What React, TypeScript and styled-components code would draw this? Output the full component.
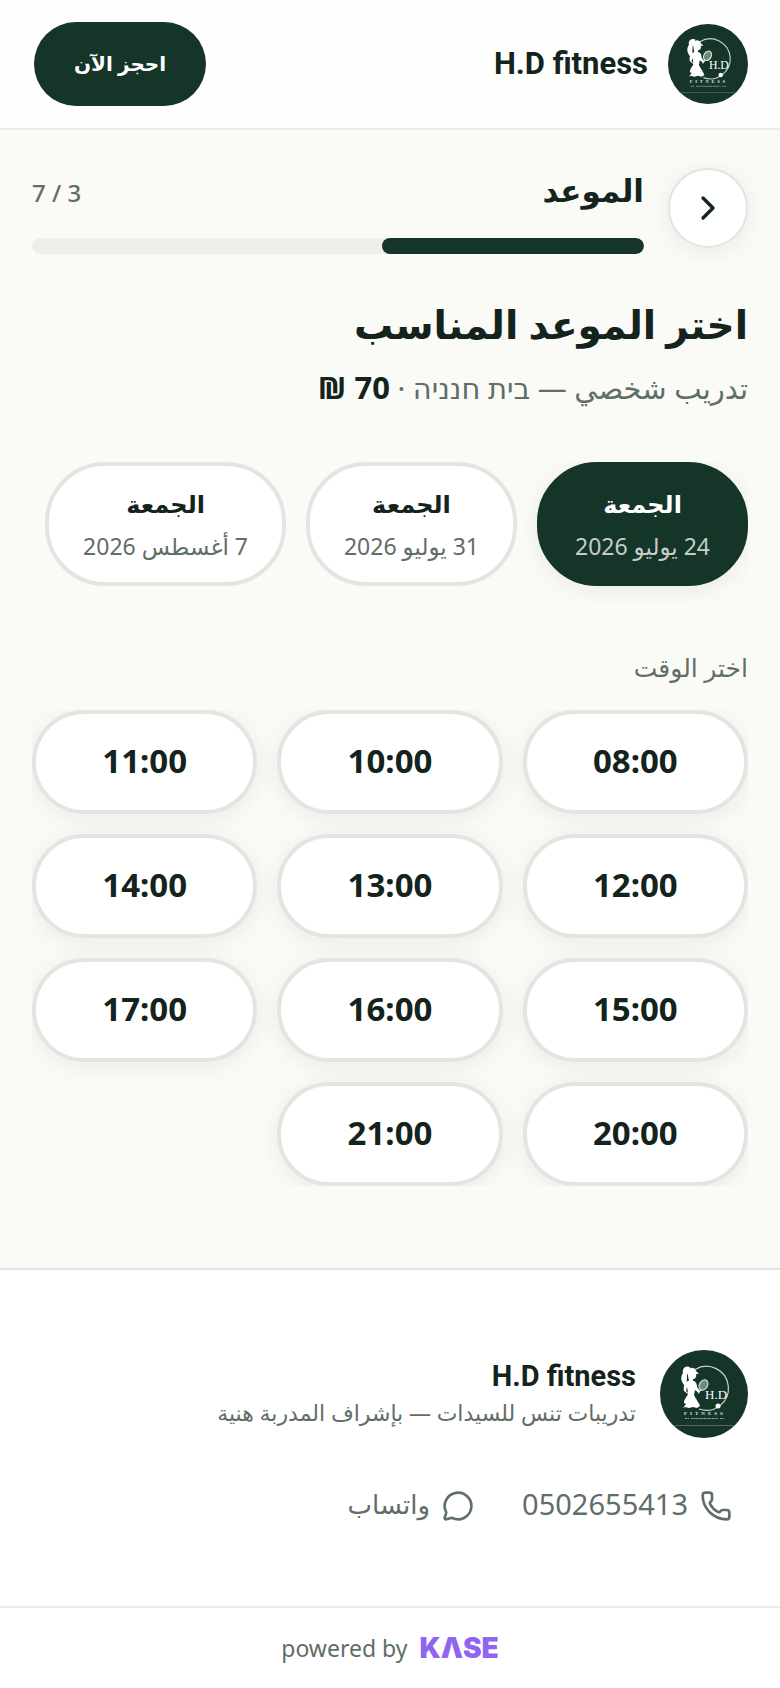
import { useState } from "react";
import { ChevronRight, MessageCircle, Phone } from "lucide-react";
import styled, { createGlobalStyle } from "styled-components";

const GlobalStyle = createGlobalStyle`
  * {
    box-sizing: border-box;
  }

  body {
    margin: 0;
    background: #fafbf7;
    color: #14231c;
    font-family: "Noto Sans", "DejaVu Sans", sans-serif;
  }

  button {
    font-family: inherit;
    cursor: pointer;
  }

  h1, h2, p {
    margin: 0;
  }
`;

const Page = styled.div`
  width: 100%;
`;

const Header = styled.header`
  display: flex;
  align-items: center;
  justify-content: space-between;
  padding: 22px 32px;

  background: #fefefd;
  border-bottom: 2px solid #ecedea;
`;

const Brand = styled.a`
  display: flex;
  align-items: center;
  gap: 20px;

  color: #14231c;
  text-decoration: none;
`;

const BrandName = styled.span`
  font-family: "Roboto", sans-serif;
  font-size: 31px;
  line-height: 40px;
  font-weight: 700;
`;

const LogoSvg = styled.svg<{ $size: number }>`
  flex: none;
  width: ${({ $size }) => $size}px;
  height: ${({ $size }) => $size}px;
`;

const BookButton = styled.button`
  height: 84px;
  margin: 0 2px;
  padding: 0 40px 2px;

  background: #143528;
  border: 0;
  border-radius: 42px;

  color: #fff;
  font-size: 20px;
  font-weight: 600;
`;

const Main = styled.main`
  padding: 38px 32px 82px;
`;

const Steps = styled.div`
  display: flex;
  align-items: flex-start;
  gap: 24px;
`;

const BackButton = styled.button`
  flex: none;
  width: 80px;
  height: 80px;

  display: flex;
  align-items: center;
  justify-content: center;

  background: #fff;
  border: 2px solid #e2e5e0;
  border-radius: 50%;
  box-shadow: 0 4px 24px rgba(20, 35, 28, 0.07);
  color: #14231c;
`;

const StepInfo = styled.div`
  flex: 1;
`;

const StepRow = styled.div`
  display: flex;
  align-items: baseline;
  justify-content: space-between;
  height: 70px;
`;

const StepName = styled.h2`
  font-size: 31px;
  line-height: 44px;
  font-weight: 700;
`;

const StepCount = styled.span`
  color: #5f6e66;
  font-size: 24px;
  line-height: 44px;
  font-weight: 500;
`;

const Track = styled.div`
  height: 16px;
  overflow: hidden;

  background: #eeefeb;
  border-radius: 8px;
`;

const Fill = styled.div`
  height: 100%;

  background: #143528;
  border-radius: 8px;
`;

const Title = styled.h1`
  margin-top: 40px;

  font-size: 39px;
  line-height: 60px;
  font-weight: 700;
`;

const Summary = styled.p`
  margin-top: 10px;

  color: #5f6e66;
  font-size: 29px;
  line-height: 48px;
`;

const Price = styled.span`
  color: #14231c;
  font-size: 31px;
  line-height: 32px;
  font-weight: 700;
`;

const Days = styled.div`
  display: flex;
  gap: 20px;
  margin-top: 50px;
  padding-bottom: 16px;
  overflow: hidden;
`;

const DayButton = styled.button<{ $active: boolean }>`
  flex: none;
  display: flex;
  flex-direction: column;
  align-items: center;
  gap: 4px;
  padding: 18px 34px;

  background: ${({ $active }) => ($active ? "#143528" : "#fff")};
  border: 4px solid ${({ $active }) => ($active ? "#143528" : "#e2e5e0")};
  border-radius: 60px;
  box-shadow: ${({ $active }) =>
    $active ? "0 4px 24px rgba(20, 35, 28, 0.07)" : "none"};
  color: ${({ $active }) => ($active ? "#fff" : "#14231c")};
`;

const DayName = styled.span`
  font-size: 24px;
  line-height: 40px;
  font-weight: 700;
`;

const DayDate = styled.span<{ $active: boolean }>`
  color: ${({ $active }) => ($active ? "#c4cdc9" : "#5f6e66")};
  font-size: 23px;
  line-height: 36px;
`;

const TimeLabel = styled.h2`
  margin: 44px 0 22px;

  color: #5f6e66;
  font-size: 25px;
  line-height: 42px;
  font-weight: 400;
`;

const Times = styled.div`
  display: grid;
  grid-template-columns: repeat(3, 1fr);
  gap: 20px;
  overflow: hidden;
`;

const TimeButton = styled.button`
  height: 104px;
  padding: 0 0 4px;

  background: #fff;
  border: 4px solid #e2e5e0;
  border-radius: 52px;
  box-shadow: 0 4px 24px rgba(20, 35, 28, 0.07);

  color: #14231c;
  font-size: 33px;
  font-weight: 700;
`;

const Footer = styled.footer`
  background: #fff;
  border-top: 2px solid #e2e5e0;
`;

const FooterTop = styled.div`
  padding: 80px 32px 56px;
`;

const FooterBrand = styled.div`
  display: flex;
  align-items: center;
  gap: 24px;
`;

const FooterName = styled.p`
  font-family: "Roboto", sans-serif;
  font-size: 29px;
  line-height: 36px;
  font-weight: 700;
`;

const FooterText = styled.p`
  color: #5f6e66;
  font-size: 22px;
  line-height: 36px;
`;

const Contacts = styled.nav`
  display: flex;
  gap: 16px;
  margin-top: 24px;
`;

const ContactLink = styled.a`
  display: flex;
  align-items: center;
  gap: 12px;
  height: 88px;
  padding: 0 16px;

  color: #5f6e66;
  font-size: 29px;
  text-decoration: none;
`;

const ContactName = styled.span`
  font-size: 26px;
  line-height: 40px;
  padding-bottom: 4px;
`;

const ContactNumber = styled.span`
  line-height: 40px;
  padding-bottom: 4px;
`;

const Powered = styled.div`
  display: flex;
  align-items: center;
  justify-content: center;
  gap: 12px;
  height: 82px;

  border-top: 2px solid #ecedea;
  color: #5f6e66;
  font-size: 23px;
`;

const Kase = styled.a`
  color: #8f66f2;
  font-family: "Inter", "Noto Sans", sans-serif;
  font-size: 28px;
  line-height: 36px;
  font-weight: 900;
  text-decoration: none;
`;

const days = [
  { name: "الجمعة", date: "24 يوليو 2026" },
  { name: "الجمعة", date: "31 يوليو 2026" },
  { name: "الجمعة", date: "7 أغسطس 2026" },
];

const times = [
  "08:00",
  "10:00",
  "11:00",
  "12:00",
  "13:00",
  "14:00",
  "15:00",
  "16:00",
  "17:00",
  "20:00",
  "21:00",
];

const step = 3;
const stepTotal = 7;

function Logo({ size }: { size: number }) {
  return (
    <LogoSvg
      $size={size}
      viewBox="0 0 88 88"
      role="img"
      aria-label="H.D fitness"
      direction="ltr"
    >
      <circle cx="44" cy="44" r="44" fill="#143528" />
      <path
        d="M35 19.500 A22 22 0 1 1 39 59"
        fill="none"
        stroke="#c9d2cd"
        strokeWidth="1.2"
      />
      {/* ponytail, head and visor */}
      <path
        d="M30 17c-5-2-8 2-7 6-3 4-2 9 2 13 2-3 2-7 2-11l2-3z"
        fill="#fff"
      />
      <path
        d="M28 20c2-3 7-3 8 1l3 3-3 0c1 3-1 5-3 5v3l-4 0c0-3-2-8-1-12z"
        fill="#fff"
      />
      {/* body and skirt */}
      <path
        d="M28 31h6c2 1 3 3 3 6l3 4-1 2-4-3-1 5c2 4 5 8 6 11l-3 2-4-1-4 1-4-1-2 1 3-4-2-1c0-4 3-6 4-9l-4-3c-1-5 1-9 4-10z"
        fill="#fff"
      />
      <path d="M27 37l-1 4 2 2z" fill="#143528" />
      <ellipse
        cx="43.500"
        cy="35"
        rx="4"
        ry="5.5"
        transform="rotate(30 43.500 35)"
        fill="#6f8a7d"
        stroke="#e5eae7"
        strokeWidth="1.2"
      />
      <path d="M41 39.500l-3 4" stroke="#e5eae7" strokeWidth="1.2" />
      <text
        x="45"
        y="49"
        fill="#fff"
        fontFamily="Liberation Serif, serif"
        fontSize="13"
      >
        H.D
      </text>
      <circle cx="58" cy="56" r="2.5" fill="#fff" />
      <text
        x="24"
        y="65"
        fill="#dfe5e1"
        fontFamily="Liberation Serif, serif"
        fontSize="5"
        fontWeight="700"
        letterSpacing="3"
      >
        FITNESS
      </text>
      <path
        d="M25 68.500h4M31 68.500h27M60 68.500h4"
        stroke="#94a59c"
        strokeWidth="1"
        strokeDasharray="2 0.600"
      />
      <path d="M13 75.500h62" stroke="#5c7468" strokeWidth="0.800" />
    </LogoSvg>
  );
}

function App() {
  const [activeDay, setActiveDay] = useState(0);

  return (
    <Page dir="rtl" lang="ar">
      <GlobalStyle />
      <Header>
        <Brand href="#">
          <Logo size={80} />
          <BrandName>H.D fitness</BrandName>
        </Brand>
        <BookButton>احجز الآن</BookButton>
      </Header>

      <Main>
        <Steps>
          <BackButton aria-label="رجوع">
            <ChevronRight size={40} />
          </BackButton>
          <StepInfo>
            <StepRow>
              <StepName>الموعد</StepName>
              <StepCount>
                {step} / {stepTotal}
              </StepCount>
            </StepRow>
            <Track>
              <Fill style={{ width: `${(step / stepTotal) * 100}%` }} />
            </Track>
          </StepInfo>
        </Steps>

        <Title>اختر الموعد المناسب</Title>
        <Summary>
          تدريب شخصي — בית חנניה · <Price>70 ₪</Price>
        </Summary>

        <Days>
          {days.map((day, index) => (
            <DayButton
              key={day.date}
              $active={index === activeDay}
              aria-pressed={index === activeDay}
              onClick={() => setActiveDay(index)}
            >
              <DayName>{day.name}</DayName>
              <DayDate $active={index === activeDay}>{day.date}</DayDate>
            </DayButton>
          ))}
        </Days>

        <TimeLabel>اختر الوقت</TimeLabel>
        <Times>
          {times.map((time) => (
            <TimeButton key={time}>{time}</TimeButton>
          ))}
        </Times>
      </Main>

      <Footer>
        <FooterTop>
          <FooterBrand>
            <Logo size={88} />
            <div>
              <FooterName>H.D fitness</FooterName>
              <FooterText>تدريبات تنس للسيدات — بإشراف المدربة هنية</FooterText>
            </div>
          </FooterBrand>
          <Contacts>
            <ContactLink href="tel:0502655413">
              <Phone size={32} />
              <ContactNumber>0502655413</ContactNumber>
            </ContactLink>
            <ContactLink href="https://wa.me/972502655413">
              <MessageCircle size={32} />
              <ContactName>واتساب</ContactName>
            </ContactLink>
          </Contacts>
        </FooterTop>
        <Powered dir="ltr">
          <span>powered by</span>
          <Kase href="#" aria-label="KASE">
            KΛSE
          </Kase>
        </Powered>
      </Footer>
    </Page>
  );
}

export default App;
